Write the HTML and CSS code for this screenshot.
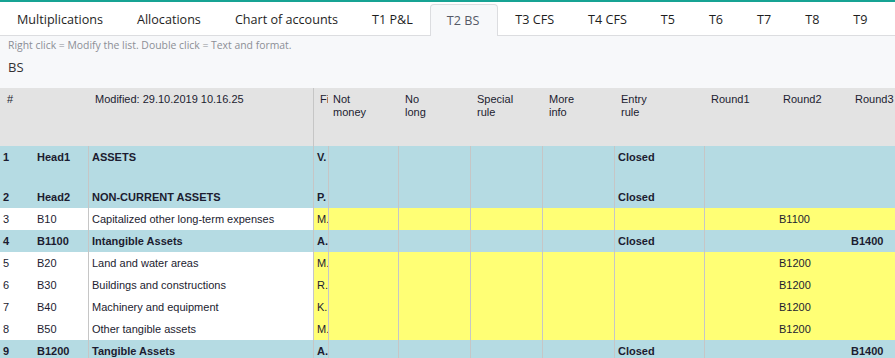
FILE: index.html
```html
<!DOCTYPE html>
<html>
<head>
  <title>T2 BS</title>
  <link rel="stylesheet" href="styles.css">
</head>
<body>
  <div class="top-bar"></div>

  <div class="tabs">
    <span class="tab">Multiplications</span>
    <span class="tab">Allocations</span>
    <span class="tab">Chart of accounts</span>
    <span class="tab">T1 P&amp;L</span>
    <span class="tab tab-active">T2 BS</span>
    <span class="tab">T3 CFS</span>
    <span class="tab">T4 CFS</span>
    <span class="tab">T5</span>
    <span class="tab">T6</span>
    <span class="tab">T7</span>
    <span class="tab">T8</span>
    <span class="tab">T9</span>
  </div>

  <div class="info">
    <div class="hint">Right click = Modify the list. Double click = Text and format.</div>
    <div class="sheet-name">BS</div>
  </div>

  <div class="grid">
    <div class="row row-head">
      <div class="cell">#</div>
      <div class="cell"></div>
      <div class="cell">Modified: 29.10.2019 10.16.25</div>
      <div class="cell line">Fi</div>
      <div class="cell">Not<br>money</div>
      <div class="cell">No<br>long</div>
      <div class="cell">Special<br>rule</div>
      <div class="cell">More<br>info</div>
      <div class="cell">Entry<br>rule</div>
      <div class="cell">Round1</div>
      <div class="cell">Round2</div>
      <div class="cell">Round3</div>
    </div>

    <div class="row row-sum row-tall">
      <div class="cell">1</div>
      <div class="cell">Head1</div>
      <div class="cell line">ASSETS</div>
      <div class="cell line">V.</div>
      <div class="cell line"></div>
      <div class="cell line"></div>
      <div class="cell line"></div>
      <div class="cell line"></div>
      <div class="cell line">Closed</div>
      <div class="cell line"></div>
      <div class="cell"></div>
      <div class="cell"></div>
    </div>

    <div class="row row-sum">
      <div class="cell">2</div>
      <div class="cell">Head2</div>
      <div class="cell line">NON-CURRENT ASSETS</div>
      <div class="cell line">P.</div>
      <div class="cell line"></div>
      <div class="cell line"></div>
      <div class="cell line"></div>
      <div class="cell line"></div>
      <div class="cell line">Closed</div>
      <div class="cell line"></div>
      <div class="cell"></div>
      <div class="cell"></div>
    </div>

    <div class="row row-item">
      <div class="cell">3</div>
      <div class="cell">B10</div>
      <div class="cell line">Capitalized other long-term expenses</div>
      <div class="cell line edit">M.</div>
      <div class="cell line edit"></div>
      <div class="cell line edit"></div>
      <div class="cell line edit"></div>
      <div class="cell line edit"></div>
      <div class="cell line edit"></div>
      <div class="cell line edit"></div>
      <div class="cell edit">B1100</div>
      <div class="cell edit"></div>
    </div>

    <div class="row row-sum">
      <div class="cell">4</div>
      <div class="cell">B1100</div>
      <div class="cell line">Intangible Assets</div>
      <div class="cell line">A.</div>
      <div class="cell line"></div>
      <div class="cell line"></div>
      <div class="cell line"></div>
      <div class="cell line"></div>
      <div class="cell line">Closed</div>
      <div class="cell line"></div>
      <div class="cell"></div>
      <div class="cell">B1400</div>
    </div>

    <div class="row row-item">
      <div class="cell">5</div>
      <div class="cell">B20</div>
      <div class="cell line">Land and water areas</div>
      <div class="cell line edit">M.</div>
      <div class="cell line edit"></div>
      <div class="cell line edit"></div>
      <div class="cell line edit"></div>
      <div class="cell line edit"></div>
      <div class="cell line edit"></div>
      <div class="cell line edit"></div>
      <div class="cell edit">B1200</div>
      <div class="cell edit"></div>
    </div>

    <div class="row row-item">
      <div class="cell">6</div>
      <div class="cell">B30</div>
      <div class="cell line">Buildings and constructions</div>
      <div class="cell line edit">R.</div>
      <div class="cell line edit"></div>
      <div class="cell line edit"></div>
      <div class="cell line edit"></div>
      <div class="cell line edit"></div>
      <div class="cell line edit"></div>
      <div class="cell line edit"></div>
      <div class="cell edit">B1200</div>
      <div class="cell edit"></div>
    </div>

    <div class="row row-item">
      <div class="cell">7</div>
      <div class="cell">B40</div>
      <div class="cell line">Machinery and equipment</div>
      <div class="cell line edit">K.</div>
      <div class="cell line edit"></div>
      <div class="cell line edit"></div>
      <div class="cell line edit"></div>
      <div class="cell line edit"></div>
      <div class="cell line edit"></div>
      <div class="cell line edit"></div>
      <div class="cell edit">B1200</div>
      <div class="cell edit"></div>
    </div>

    <div class="row row-item">
      <div class="cell">8</div>
      <div class="cell">B50</div>
      <div class="cell line">Other tangible assets</div>
      <div class="cell line edit">M.</div>
      <div class="cell line edit"></div>
      <div class="cell line edit"></div>
      <div class="cell line edit"></div>
      <div class="cell line edit"></div>
      <div class="cell line edit"></div>
      <div class="cell line edit"></div>
      <div class="cell edit">B1200</div>
      <div class="cell edit"></div>
    </div>

    <div class="row row-sum">
      <div class="cell">9</div>
      <div class="cell">B1200</div>
      <div class="cell line">Tangible Assets</div>
      <div class="cell line">A.</div>
      <div class="cell line"></div>
      <div class="cell line"></div>
      <div class="cell line"></div>
      <div class="cell line"></div>
      <div class="cell line">Closed</div>
      <div class="cell line"></div>
      <div class="cell"></div>
      <div class="cell">B1400</div>
    </div>
  </div>
</body>
</html>
```

FILE: styles.css
```css
body {
  margin: 0;
  width: 895px;
  overflow: hidden;
  background: #ffffff;
  font-family: "Liberation Sans", Arial, sans-serif;
  color: #1c1c30;
}

.top-bar {
  height: 2px;
  background-color: #17a394;
}

/* tab strip */
.tabs {
  display: flex;
  height: 33px;
  border-bottom: 1px solid #dcdde0;
  font-family: "Open Sans", sans-serif;
  font-size: 12.6px;
  white-space: nowrap;
}

.tab {
  padding: 3px 17px 0;
  line-height: 30px;
  color: #1e1e1e;
}

.tab-active {
  margin-top: 2px;
  padding: 1px 18px 1px 16px;
  line-height: 29px;
  background-color: #f7f8fa;
  border: 1px solid #dcdde0;
  border-bottom: none;
  border-radius: 4px 4px 0 0;
  margin-bottom: -1px;
  color: #555a66;
}

/* text above the grid */
.info {
  height: 52px;
  background-color: #f7f8fa;
  padding-left: 8px;
}

.hint {
  padding-top: 2px;
  font-family: "Open Sans", sans-serif;
  font-size: 10.4px;
  line-height: 15px;
  color: #8c8f96;
}

.sheet-name {
  margin-top: 5px;
  font-family: "Open Sans", sans-serif;
  font-size: 13px;
  line-height: 18px;
  color: #333333;
}

/* the grid */
.grid {
  width: 920px;
  font-size: 11px;
}

.row {
  display: grid;
  grid-template-columns: 34px 54px 225px 15px 70px 72px 72px 72px 90px 72px 72px 72px;
  height: 22px;
  line-height: 22px;
}

.cell {
  padding-left: 3px;
  overflow: hidden;
  white-space: nowrap;
}

.line {
  border-left: 1px solid #c6c6c6;
}

.row-head {
  height: 58px;
  background-color: #e3e3e3;
  line-height: 13px;
}

.row-head .cell {
  padding: 5px 0 0 7px;
  white-space: normal;
}

.row-head .cell:nth-child(4) {
  padding-left: 6px;
}

.row-head .cell:nth-child(5) {
  padding-left: 5px;
}

.row-tall {
  height: 40px;
}

.row-sum {
  background-color: #b5dbe3;
  font-weight: bold;
}

.row-item .cell {
  background-color: #ffffff;
}

.row-item .edit {
  background-color: #ffff75;
}
```
